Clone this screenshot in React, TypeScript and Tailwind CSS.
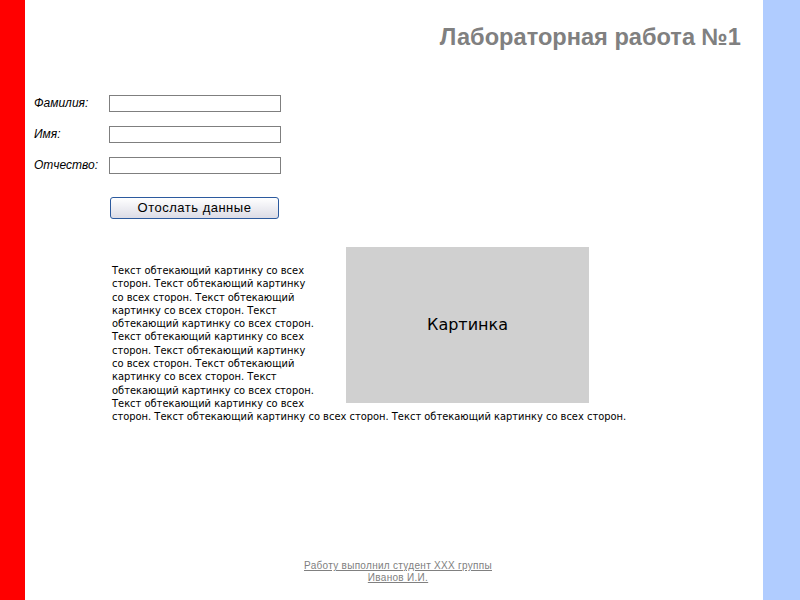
import React from 'react';

// --- FORM FIELDS ---
const fields = ['Фамилия:', 'Имя:', 'Отчество:'];

const text =
  'Текст обтекающий картинку со всех сторон. Текст обтекающий картинку со всех сторон. Текст обтекающий картинку со всех сторон. Текст обтекающий картинку со всех сторон. Текст обтекающий картинку со всех сторон. Текст обтекающий картинку со всех сторон. Текст обтекающий картинку со всех сторон. Текст обтекающий картинку со всех сторон. Текст обтекающий картинку со всех сторон. Текст обтекающий картинку со всех сторон. Текст обтекающий картинку со всех сторон.';

function App() {
  return (
    <div className="flex h-[600px] w-[800px] bg-white" style={{ fontFamily: '"Liberation Sans", Arial, sans-serif' }}>
      <div className="w-[25px] shrink-0 bg-[#ff0000]" />

      <main className="flex flex-1 flex-col">
        <h1 className="pr-[22px] pt-[23px] text-right text-[23.6px] font-bold leading-[28px] text-[#808080]">
          Лабораторная работа №1
        </h1>

        {/* --- FORM --- */}
        <form className="mt-[43px] flex flex-col gap-[13px] pl-[9px]">
          {fields.map((f) => (
            <div key={f} className="flex items-center">
              <label className="w-[75px] text-[12px] italic text-black">{f}</label>
              <input className="h-[17px] w-[172px] border border-[#7f7f7f] bg-white" />
            </div>
          ))}
          <button
            type="button"
            className="ml-[76px] mt-[10px] h-[22px] w-[169px] rounded-[3px] border border-[#2c5a9e] bg-gradient-to-b from-white to-[#dcdce6] text-[13px] tracking-[0.5px] text-black"
          >
            Отослать данные
          </button>
        </form>

        {/* --- TEXT AROUND PICTURE --- */}
        <div className="ml-[87px] mt-[28px] w-[560px] font-stretch-condensed text-[11px] leading-[13.3px] text-black" style={{ fontFamily: '"DejaVu Sans", Tahoma, sans-serif' }}>
          <div className="float-right ml-[30px] mr-[83px] flex h-[156px] w-[243px] items-center justify-center bg-[#d0d0d0] font-stretch-normal text-[16px]">
            Картинка
          </div>
          <p className="pt-[17px]">{text}</p>
        </div>

        {/* --- FOOTER --- */}
        <footer className="mt-auto pb-[16px] pl-[8px] text-center text-[10px] leading-[12px] tracking-[0.3px] text-[#808080] underline">
          <p>Работу выполнил студент XXX группы</p>
          <p>Иванов И.И.</p>
        </footer>
      </main>

      <div className="w-[37px] shrink-0 bg-[#b0ccff]" />
    </div>
  );
}

export default App;
